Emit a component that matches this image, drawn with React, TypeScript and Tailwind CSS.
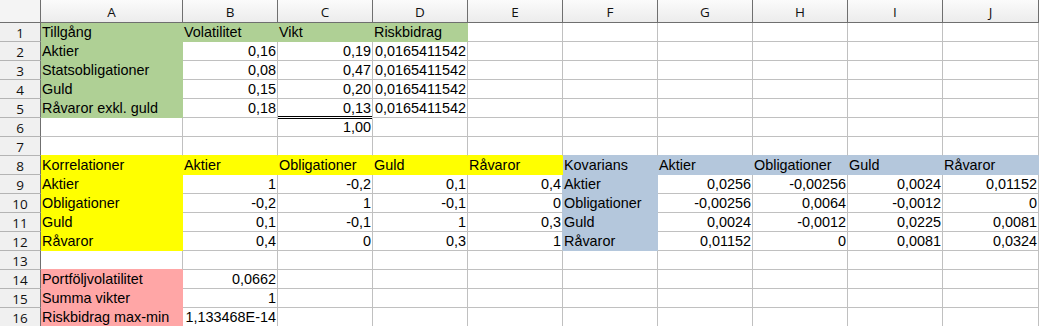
import { Fragment } from 'react'

type Fill = '.' | 'g' | 'y' | 'b' | 'p'

const COLS = ['A', 'B', 'C', 'D', 'E', 'F', 'G', 'H', 'I', 'J']

// cell values, row by row (A..J)
const ROWS: string[][] = [
  ['Tillgång', 'Volatilitet', 'Vikt', 'Riskbidrag', '', '', '', '', '', ''],
  ['Aktier', '0,16', '0,19', '0,0165411542', '', '', '', '', '', ''],
  ['Statsobligationer', '0,08', '0,47', '0,0165411542', '', '', '', '', '', ''],
  ['Guld', '0,15', '0,20', '0,0165411542', '', '', '', '', '', ''],
  ['Råvaror exkl. guld', '0,18', '0,13', '0,0165411542', '', '', '', '', '', ''],
  ['', '', '1,00', '', '', '', '', '', '', ''],
  ['', '', '', '', '', '', '', '', '', ''],
  ['Korrelationer', 'Aktier', 'Obligationer', 'Guld', 'Råvaror', 'Kovarians', 'Aktier', 'Obligationer', 'Guld', 'Råvaror'],
  ['Aktier', '1', '-0,2', '0,1', '0,4', 'Aktier', '0,0256', '-0,00256', '0,0024', '0,01152'],
  ['Obligationer', '-0,2', '1', '-0,1', '0', 'Obligationer', '-0,00256', '0,0064', '-0,0012', '0'],
  ['Guld', '0,1', '-0,1', '1', '0,3', 'Guld', '0,0024', '-0,0012', '0,0225', '0,0081'],
  ['Råvaror', '0,4', '0', '0,3', '1', 'Råvaror', '0,01152', '0', '0,0081', '0,0324'],
  ['', '', '', '', '', '', '', '', '', ''],
  ['Portföljvolatilitet', '0,0662', '', '', '', '', '', '', '', ''],
  ['Summa vikter', '1', '', '', '', '', '', '', '', ''],
  ['Riskbidrag max-min', '1,133468E-14', '', '', '', '', '', '', '', ''],
]

const FILLS = [
  'gggg......',
  'g.........',
  'g.........',
  'g.........',
  'g.........',
  '..........',
  '..........',
  'yyyyybbbbb',
  'y....b....',
  'y....b....',
  'y....b....',
  'y....b....',
  '..........',
  'p.........',
  'p.........',
  'p.........',
]

const BG: Record<Fill, string> = {
  '.': 'bg-white',
  g: 'bg-[#afd095]',
  y: 'bg-[#ffff00]',
  b: 'bg-[#b4c7dc]',
  p: 'bg-[#ffa6a6]',
}

const BORDER_R: Record<Fill, string> = {
  '.': 'border-r-[#c0c0c0]',
  g: 'border-r-[#afd095]',
  y: 'border-r-[#ffff00]',
  b: 'border-r-[#b4c7dc]',
  p: 'border-r-[#ffa6a6]',
}

const BORDER_B: Record<Fill, string> = {
  '.': 'border-b-[#c0c0c0]',
  g: 'border-b-[#afd095]',
  y: 'border-b-[#ffff00]',
  b: 'border-b-[#b4c7dc]',
  p: 'border-b-[#ffa6a6]',
}

const fillAt = (r: number, c: number): Fill => (FILLS[r]?.[c] ?? '.') as Fill

// coloured cells paint over the grid lines around them
const edge = (own: Fill, next: Fill): Fill => (own !== '.' ? own : next)

const isNumber = (v: string) => /^-?[\d,]+(E-\d+)?$/.test(v)

function Cell({ r, c }: { r: number; c: number }) {
  const value = ROWS[r][c]
  const own = fillAt(r, c)
  const right = BORDER_R[edge(own, fillAt(r, c + 1))]
  let bottom = BORDER_B[edge(own, fillAt(r + 1, c))]
  let extra = ''
  // double line under the weights (C5 / C6)
  if (r === 4 && c === 2) {
    bottom = 'border-b-white'
    extra = 'shadow-[inset_0_-1px_0_#000]'
  }
  if (r === 5 && c === 2) extra = 'shadow-[inset_0_1px_0_#000]'

  return (
    <div
      className={`relative h-[19px] border-r border-b px-px leading-[18px] whitespace-nowrap text-black ${BG[own]} ${right} ${bottom} ${extra} ${
        isNumber(value) ? 'text-right' : 'text-left'
      }`}
    >
      {value}
    </div>
  )
}

export default function App() {
  return (
    <div className="h-[326px] w-[1039px] overflow-hidden bg-white">
      <div className="grid grid-cols-[41px_142px_repeat(8,95px)_96px] font-['Liberation_Sans',Arial,sans-serif] text-[14.4px]">
        {/* corner + column letters */}
        <div className="h-[23px] border-r border-b border-[#6f6f6f] bg-[#f4f4f4]" />
        {COLS.map((col) => (
          <div
            key={col}
            className="flex h-[23px] items-center justify-center border-r border-b border-[#6f6f6f] bg-linear-to-b from-[#fbfbfb] to-[#ececec] pt-[2px] font-['Open_Sans','Noto_Sans',sans-serif] text-[13.5px] text-[#111]"
          >
            {col}
          </div>
        ))}

        {ROWS.map((row, r) => (
          <Fragment key={r}>
            <div className="flex h-[19px] items-center justify-center border-r border-b border-r-[#6f6f6f] border-b-[#b4b4b4] bg-[#f0f0f0] pt-[2px] font-['Open_Sans','Noto_Sans',sans-serif] text-[13.5px] text-[#111]">
              {r + 1}
            </div>
            {row.map((_, c) => (
              <Cell key={c} r={r} c={c} />
            ))}
          </Fragment>
        ))}
      </div>
    </div>
  )
}
